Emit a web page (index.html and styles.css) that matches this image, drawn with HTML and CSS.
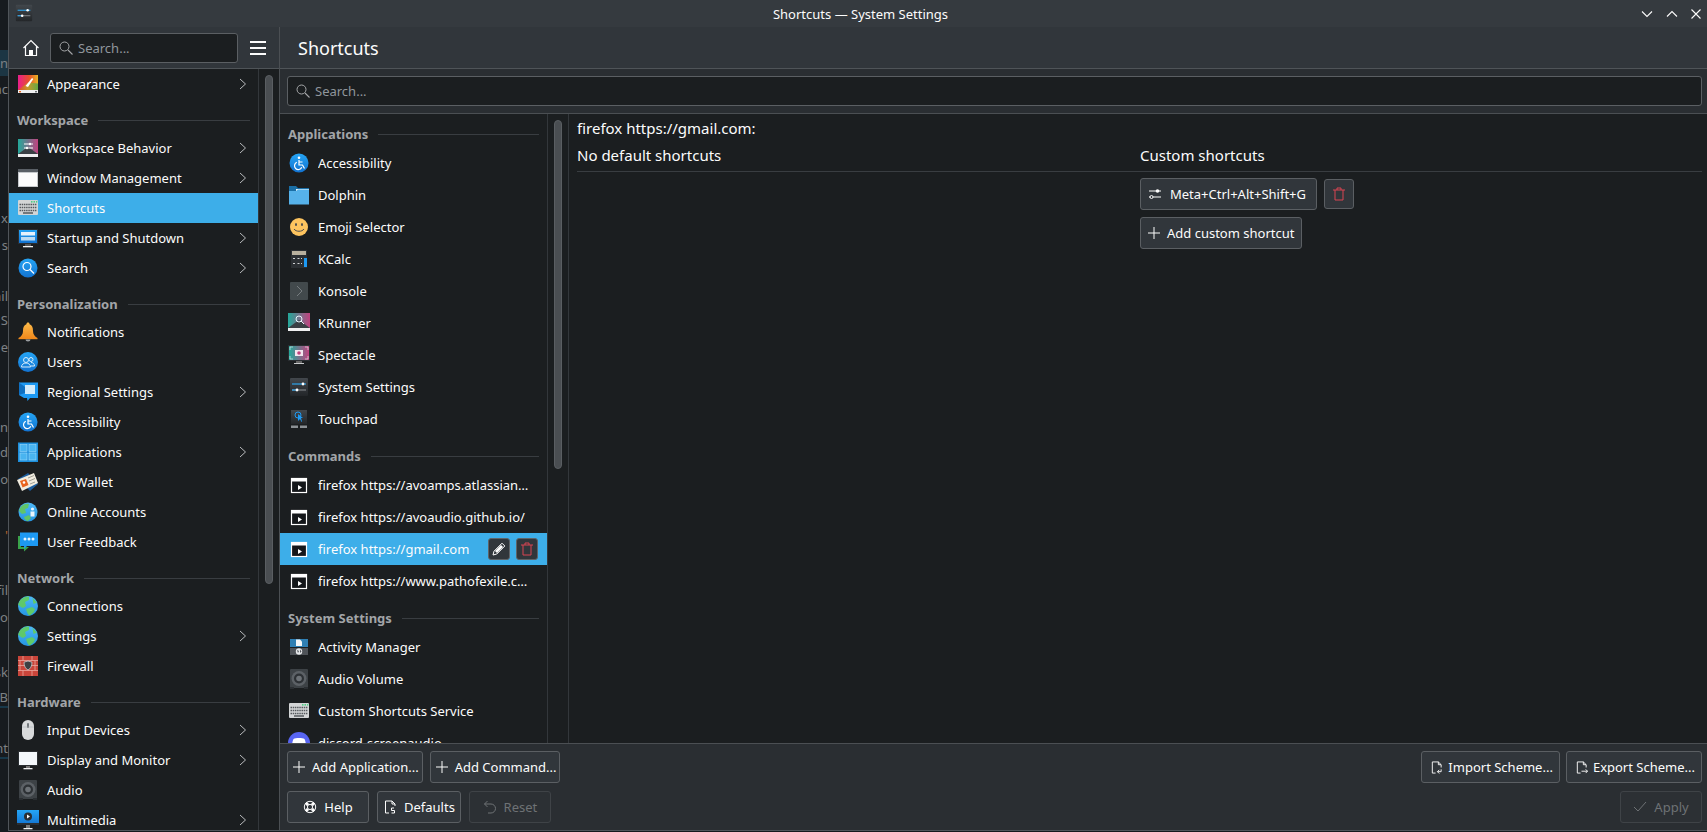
FILE: index.html
```html
<!DOCTYPE html>
<html lang="en">
<head>
<meta charset="utf-8">
<title>Shortcuts — System Settings</title>
<link rel="stylesheet" href="styles.css">
</head>
<body>
<svg class="sprite" xmlns="http://www.w3.org/2000/svg">
<defs>
<linearGradient id="gBlue" x1="0" y1="0" x2="0" y2="1"><stop offset="0" stop-color="#25a5f5"/><stop offset="1" stop-color="#1272d0"/></linearGradient>
<linearGradient id="gGlobe" x1="0" y1="0" x2="0" y2="1"><stop offset="0" stop-color="#4fb8f6"/><stop offset="1" stop-color="#2596e2"/></linearGradient>
<linearGradient id="gDark" x1="0" y1="0" x2="0" y2="1"><stop offset="0" stop-color="#42474c"/><stop offset="1" stop-color="#232629"/></linearGradient>
<linearGradient id="gBell" x1="0" y1="0" x2="0" y2="1"><stop offset="0" stop-color="#fdbc4b"/><stop offset="1" stop-color="#f08a1d"/></linearGradient>
<linearGradient id="gRainbow" x1="0" y1="0" x2="1" y2="0"><stop offset="0" stop-color="#e91e8c"/><stop offset=".55" stop-color="#e8502a"/><stop offset="1" stop-color="#e9b524"/></linearGradient>
<linearGradient id="gLow" x1="0" y1="0" x2="1" y2="0"><stop offset="0" stop-color="#e8402e"/><stop offset=".5" stop-color="#c79a2a"/><stop offset="1" stop-color="#63a844"/></linearGradient>
<linearGradient id="gPink" x1="0" y1="0" x2="1" y2="0"><stop offset="0" stop-color="#23a99a"/><stop offset="1" stop-color="#c1427f"/></linearGradient>
</defs>
<symbol id="i-settings" viewBox="0 0 22 22"><rect x="2" y="2" width="18" height="18" rx="1" fill="url(#gDark)"/><path d="M4 8h14" stroke="#2ea3ea" stroke-width="1.2"/><circle cx="15" cy="8" r="1.4" fill="#fff"/><path d="M4 14h14" stroke="#8b9094" stroke-width="1"/><path d="M4 14h5" stroke="#2ea3ea" stroke-width="1.2"/><circle cx="9" cy="14" r="1.4" fill="#fff"/></symbol>
<symbol id="i-appearance" viewBox="0 0 22 22"><rect x="1" y="2" width="20" height="15" fill="url(#gRainbow)"/><path d="M1 17 11 9.500l10 1V17z" fill="url(#gLow)"/><path d="M8.500 13 15 5l1.300 1-5.300 8z" fill="#fff"/><rect x="1" y="17" width="20" height="3" fill="#eff0f1"/><rect x="2" y="18" width="2" height="1.4" fill="#e8641f"/><rect x="18" y="18" width="2" height="1.4" fill="#6b7275"/></symbol>
<symbol id="i-behavior" viewBox="0 0 22 22"><rect x="1" y="2" width="20" height="15" fill="url(#gPink)"/><path d="M1 17 11 10l10 7z" fill="#3a4045"/><path d="M7 7h9M7 11h9" stroke="#fff" stroke-width="1"/><circle cx="13" cy="7" r="1.2" fill="#fff"/><circle cx="10" cy="11" r="1.2" fill="#fff"/><rect x="1" y="17" width="20" height="3" fill="#eff0f1"/></symbol>
<symbol id="i-window" viewBox="0 0 22 22"><rect x="1" y="2" width="20" height="18" fill="#c5c8cb"/><rect x="1" y="2" width="20" height="3" fill="#5a6066"/><rect x="2" y="6" width="18" height="13" fill="#fcfcfc"/></symbol>
<symbol id="i-keyboard" viewBox="0 0 22 22"><rect x="1" y="3" width="20" height="15" rx="1" fill="#d3d5d6"/><rect x="14" y="4.200" width="1.500" height="1.300" fill="#2ecc71"/><rect x="16.500" y="4.200" width="1.500" height="1.300" fill="#2ecc71"/><rect x="19" y="4.200" width="1.300" height="1.300" fill="#2ecc71"/><path d="M2.500 7.500h17M2.500 10.500h17M2.500 13.500h17" stroke="#55595d" stroke-width="1.600" stroke-dasharray="1.500 .7"/><path d="M6 16h10" stroke="#55595d" stroke-width="1.500"/></symbol>
<symbol id="i-startup" viewBox="0 0 22 22"><rect x="1" y="2" width="20" height="15" fill="#2a2e32"/><rect x="2" y="3" width="18" height="13" fill="url(#gBlue)"/><rect x="4" y="5" width="14" height="3.500" fill="#e6f2fb"/><rect x="4" y="10" width="14" height="3.500" fill="#bcdcf3"/><rect x="8" y="17" width="6" height="2" fill="#555"/><rect x="6" y="19" width="10" height="1.300" fill="#eff0f1"/></symbol>
<symbol id="i-search-app" viewBox="0 0 22 22"><circle cx="11" cy="11" r="9.500" fill="url(#gBlue)"/><circle cx="10" cy="9.500" r="4" fill="none" stroke="#fff" stroke-width="1.200"/><path d="m13 12.500 4 4" stroke="#fff" stroke-width="1.300"/></symbol>
<symbol id="i-bell" viewBox="0 0 22 22"><path d="M11 1.500c-1 0-1.500.7-1.600 1.700C6.800 4 6 6.500 6 10c0 3-1.500 5.500-4.500 7h19c-3-1.500-4.500-4-4.500-7 0-3.500-.8-6-3.400-6.800C12.500 2.200 12 1.500 11 1.500z" fill="url(#gBell)"/><rect x="1.500" y="17" width="19" height="1.200" fill="#f08a1d"/><path d="M8.500 18.500h5a2.500 2 0 0 1-5 0z" fill="#9a9ea1"/></symbol>
<symbol id="i-users" viewBox="0 0 22 22"><circle cx="11" cy="11" r="10" fill="url(#gBlue)"/><g fill="none" stroke="#d6ecfb" stroke-width="1"><circle cx="9" cy="9" r="2.500"/><circle cx="14" cy="8.500" r="2"/><path d="M4.500 16c0-2.500 2-4 4.500-4s4.500 1.500 4.500 4z"/><path d="M14 11.500c2 0 3.500 1.200 3.500 3.500h-3.500"/></g></symbol>
<symbol id="i-regional" viewBox="0 0 22 22"><path d="M2 1.500h19v15.500h-8l-2.500 3-.5-3H7L2 14z" fill="#1d99f3"/><path d="M2 1.500 8 6v6l-6 2z" fill="#0f6fc0"/><rect x="8" y="4" width="10" height="9" fill="#d4ecfb"/></symbol>
<symbol id="i-access" viewBox="0 0 22 22"><circle cx="11" cy="11" r="9.500" fill="url(#gBlue)"/><circle cx="11" cy="5.700" r="1.300" fill="#fff"/><path d="M11 8v5h3.500l2 3.500M11 10h3.500" fill="none" stroke="#fff" stroke-width="1.200"/><path d="M8.800 10.300a3.800 3.800 0 1 0 5 5" fill="none" stroke="#fff" stroke-width="1.200"/></symbol>
<symbol id="i-apps" viewBox="0 0 22 22"><rect x="1" y="1.500" width="20" height="19.500" fill="#1d8fdc"/><g fill="#49b4f0" stroke="#9bd9fb" stroke-width=".6"><rect x="3" y="3.500" width="7" height="7"/><rect x="12" y="3.500" width="7" height="7"/><rect x="3" y="12" width="7" height="7"/><rect x="12" y="12" width="7" height="7"/></g></symbol>
<symbol id="i-wallet" viewBox="0 0 22 22"><path d="M1 8 11 2l10 11-8 7z" fill="#1c5d9e"/><path d="M0 9 17 2l4 10-16 8z" fill="#f1ecdf"/><path d="M3 10 9 8l2.500 6-6 2.500z" fill="#e8641f"/><circle cx="7" cy="11.500" r="1.300" fill="#fff"/><path d="m11 7 6-2.500M12 10l6-2.500M13 13l5-2" stroke="#8a8a80" stroke-width=".8"/></symbol>
<symbol id="i-online" viewBox="0 0 22 22"><circle cx="11" cy="11" r="9.500" fill="url(#gGlobe)"/><path d="M3 7c2-4 7-5 9-4l-1 4-3 1 1 4-4 1-3-3zM7 16l5-2 2 3-3 3c-2 0-4-2-4-4z" fill="#5fc46a"/><circle cx="15.500" cy="8" r="1.600" fill="#eaf5fc"/><rect x="13.500" y="10.500" width="4" height="5" fill="#eaf5fc"/></symbol>
<symbol id="i-feedback" viewBox="0 0 22 22"><path d="M1 5h3v11H1z" fill="#3aa34a"/><path d="M1 16h11l-5 4.500V18H1z" fill="#3aa34a"/><path d="M3 1.500h18V15H10l-3 3v-3H3z" fill="#1d99f3"/><g fill="#e5f3fc"><circle cx="8" cy="8" r="1.500"/><circle cx="12" cy="8" r="1.500"/><circle cx="16" cy="8" r="1.500"/></g></symbol>
<symbol id="i-globe" viewBox="0 0 22 22"><circle cx="11" cy="11" r="10" fill="url(#gGlobe)"/><path d="M3 5.500C5 3 9 1 12 1.500L12 5 8 7l1 4-3 2-2-1-3-2.500zM9 14l6-2 3 2-1 3-4 3.500c-2 0-3-3-4-6.500zM15.500 3l4.500 4.500-3.500 1.500z" fill="#5fc96a"/></symbol>
<symbol id="i-firewall" viewBox="0 0 22 22"><rect x="1" y="1" width="20" height="20" fill="#c9453a"/><path d="M1 5.500h20M1 10.500h20M1 15.500h20M6 1v4.500M15 1v4.500M3 5.500v5M18 5.500v5M3 10.500v5M18 10.500v5M6 15.500v5.500M15 15.500v5.500" stroke="#eba69d" stroke-width=".8"/><path d="M11 6l4 1.200c0 4-1.500 6.500-4 7.800-2.500-1.300-4-3.800-4-7.800z" fill="#3b3f42" stroke="#c7c9cb" stroke-width=".8"/></symbol>
<symbol id="i-mouse" viewBox="0 0 22 22"><rect x="5" y="1" width="12" height="20" rx="6" fill="#d8dadb"/><rect x="10" y="4" width="2" height="5" rx="1" fill="#73787c"/><path d="M5 8h12" stroke="#a7aaad" stroke-width=".5"/></symbol>
<symbol id="i-display" viewBox="0 0 22 22"><rect x="1" y="2" width="20" height="15" fill="#2a2e32"/><rect x="2" y="3" width="18" height="13" fill="#f4f8fb"/><rect x="9" y="17" width="4" height="2" fill="#777"/><rect x="6.500" y="19" width="9" height="1.300" fill="#eff0f1"/></symbol>
<symbol id="i-audio" viewBox="0 0 22 22"><rect x="2" y="1" width="18" height="19" rx="1" fill="#3d4246"/><rect x="2" y="19" width="4" height="2" fill="#2a2e32"/><rect x="16" y="19" width="4" height="2" fill="#2a2e32"/><circle cx="11" cy="10.500" r="7.500" fill="#5c6166"/><circle cx="11" cy="10.500" r="5" fill="#2d3135"/><circle cx="11" cy="10.500" r="2.800" fill="#6d7277"/></symbol>
<symbol id="i-media" viewBox="0 0 22 22"><rect x="0" y="1" width="22" height="15" fill="url(#gBlue)"/><rect x="0" y="14" width="22" height="2" fill="#2a2e32"/><circle cx="11" cy="7.500" r="4" fill="#2a2e32"/><path d="m10 5.500 3 2-3 2z" fill="#fff"/><rect x="9" y="16" width="4" height="3" fill="#777"/><rect x="6.500" y="19" width="9" height="1.300" fill="#eff0f1"/></symbol>
<symbol id="i-folder" viewBox="0 0 22 22"><path d="M1 2h7l2 2h11v16H1z" fill="#1a6ea5"/><rect x="8" y="5" width="13" height="2" fill="#eaf5fc"/><path d="M1 7h7l2-1.500h11V20.500H1z" fill="#56b2ea"/></symbol>
<symbol id="i-emoji" viewBox="0 0 22 22"><circle cx="11" cy="11" r="9" fill="#fdc45f"/><ellipse cx="8" cy="8.500" rx="1" ry="1.500" fill="#4d4d4d"/><ellipse cx="14" cy="8.500" rx="1" ry="1.500" fill="#4d4d4d"/><path d="M6 13c2 3 8 3 10 0" fill="none" stroke="#4d4d4d" stroke-width="1"/></symbol>
<symbol id="i-kcalc" viewBox="0 0 22 22"><rect x="3" y="2" width="16" height="18" fill="#2b2f33"/><rect x="4" y="3" width="14" height="4" fill="#b8b09e"/><rect x="16" y="10" width="3" height="9" fill="#1d99f3"/><path d="M5 10.500h2M9.500 10.500h2M5 15.500h2M9.500 15.500h2M13 10.500h1M13 15.500h1" stroke="#cfd1d3" stroke-width="1"/></symbol>
<symbol id="i-konsole" viewBox="0 0 22 22"><rect x="2" y="2" width="18" height="18" rx="1" fill="#42494c"/><path d="m9 6 5 5-5 5" fill="none" stroke="#767c7f" stroke-width="1"/></symbol>
<symbol id="i-krunner" viewBox="0 0 22 22"><rect x="0" y="1" width="22" height="15" fill="url(#gPink)"/><path d="M0 16 11 8l11 8z" fill="#3a4045"/><circle cx="11" cy="7" r="3" fill="none" stroke="#eaf5fc" stroke-width="1"/><path d="m13 9 3 3" stroke="#eaf5fc" stroke-width="1"/><rect x="0" y="16" width="22" height="3" fill="#eff0f1"/></symbol>
<symbol id="i-spectacle" viewBox="0 0 22 22"><rect x="0" y="1" width="22" height="16" fill="#2a2e32"/><rect x="1" y="2" width="20" height="14" fill="url(#gPink)"/><rect x="7" y="6" width="8" height="6" fill="#f3e6ef"/><circle cx="11" cy="9" r="1.800" fill="#c1427f"/><path d="M2 6V3h3M20 6V3h-3M2 12v3h3M20 12v3h-3" fill="none" stroke="#dfe3e6" stroke-width=".7"/><rect x="8" y="17" width="6" height="2" fill="#666"/><rect x="6" y="19" width="10" height="1" fill="#c8cacc"/></symbol>
<symbol id="i-touchpad" viewBox="0 0 22 22"><rect x="3" y="2" width="16" height="14" fill="url(#gDark)"/><path d="M10 6v7l2-2 1.500 3 .5-.5L13 10h2z" fill="#1d99f3"/><circle cx="10" cy="7" r="3" fill="none" stroke="#1d99f3"/><rect x="3" y="17.500" width="7" height="2.500" fill="#8b9094"/><rect x="12" y="17.500" width="7" height="2.500" fill="#8b9094"/></symbol>
<symbol id="i-command" viewBox="0 0 22 22"><rect x="3.500" y="4.500" width="15" height="14" fill="#14171a" stroke="#fff" stroke-width="1.200"/><rect x="3" y="4" width="16" height="3.500" fill="#fff"/><path d="m10 11 4 2.500-4 2.500z" fill="#fff"/></symbol>
<symbol id="i-activity" viewBox="0 0 22 22"><rect x="2" y="3" width="18" height="8" fill="#2f7fb3"/><path d="M8 3.500h4l2 2V10H8z" fill="#f4f6f7"/><rect x="2" y="12" width="18" height="7" fill="#4f5358"/><circle cx="11" cy="15.500" r="3.200" fill="#e6e8ea"/><path d="M9 14l2 1-1 2zM12 13.500l1.500 2-1.500 1.500z" fill="#4f5358"/></symbol>
<symbol id="i-discord" viewBox="0 0 22 22"><circle cx="11" cy="11" r="11" fill="#5865f2"/><path d="M5.500 7c2-1.300 9-1.300 11 0 1 2 1.500 5 1.500 8-1 .8-2 1.200-3 1.500l-1-1.500H8L7 16.500c-1-.3-2-.7-3-1.500 0-3 .5-6 1.500-8z" fill="#fff"/></symbol>
<symbol id="i-chev" viewBox="0 0 8 12"><path d="m1 1 5.500 5L1 11" fill="none" stroke="#b9bbbd" stroke-width="1"/></symbol>
<symbol id="i-home" viewBox="0 0 18 18"><path d="M1.500 9 9 1.500 16.500 9M3.500 7.500v9h11v-9" fill="none" stroke="#fcfcfc" stroke-width="1.200"/><rect x="7" y="11" width="4" height="5.500" fill="#fcfcfc"/></symbol>
<symbol id="i-loupe" viewBox="0 0 14 14"><circle cx="5.500" cy="5.500" r="4.500" fill="none" stroke="#a5a7a9" stroke-width="1"/><path d="m9 9 4.500 4.500" stroke="#a5a7a9" stroke-width="1.100"/></symbol>
<symbol id="i-plus" viewBox="0 0 12 12"><path d="M6 0v12M0 6h12" stroke="#fcfcfc" stroke-width="1"/></symbol>
<symbol id="i-trash" viewBox="0 0 14 14"><path d="M1 3h12M5 3V1h4v2M3 3v10h8V3" fill="none" stroke="#da4453" stroke-width="1"/></symbol>
<symbol id="i-pencil" viewBox="0 0 14 14"><path d="m10 1.200 2.800 2.800-8 8-3.800 1 1-3.800z" fill="#31363b" stroke="#fcfcfc" stroke-width="1"/><path d="m9 3 2 2-6 6-2-2z" fill="#fcfcfc"/></symbol>
<symbol id="i-sliders" viewBox="0 0 14 14"><path d="M1 4h12M1 10h12" stroke="#fcfcfc" stroke-width="1"/><circle cx="9.500" cy="4" r="1.800" fill="#fcfcfc"/><circle cx="3.500" cy="10" r="1.500" fill="#31363b" stroke="#fcfcfc"/></symbol>
<symbol id="i-help" viewBox="0 0 14 14"><circle cx="7" cy="7" r="5.700" fill="none" stroke="#fcfcfc" stroke-width="1"/><path d="m2.800 2.800 2.400 2.400M11.200 2.800 8.800 5.200M2.800 11.200l2.400-2.400M11.200 11.200 8.800 8.800" stroke="#fcfcfc" stroke-width="3"/><circle cx="7" cy="7" r="2.600" fill="#31363b" stroke="#fcfcfc" stroke-width="1"/></symbol>
<symbol id="i-doc-back" viewBox="0 0 14 14"><path d="M9 1H2.500v12H6M9 1l3 3v2M9 1v3h3" fill="none" stroke="#fcfcfc" stroke-width="1"/><path d="M11 8H8.500v2.500h3V13H8.500" fill="none" stroke="#fcfcfc" stroke-width="1"/></symbol>
<symbol id="i-undo" viewBox="0 0 14 14"><path d="M4.500 1 1.500 4l3 3M1.500 4H8a4.500 4.500 0 0 1 0 9H5" fill="none" stroke="#6e7275" stroke-width="1"/></symbol>
<symbol id="i-import" viewBox="0 0 14 14"><path d="M9 1H2.500v12H6M9 1l3 3v3M9 1v3h3M12 9v2.500H8M10 9.500 8 11.500 10 13.500" fill="none" stroke="#fcfcfc" stroke-width="1"/></symbol>
<symbol id="i-export" viewBox="0 0 14 14"><path d="M9 1H2.500v12H6M9 1l3 3v3M9 1v3h3M7 11h6.500M11.500 9l2 2-2 2" fill="none" stroke="#fcfcfc" stroke-width="1"/></symbol>
<symbol id="i-check" viewBox="0 0 14 14"><path d="m1 7 4 4 8-9" fill="none" stroke="#6e7275" stroke-width="1"/></symbol>
<symbol id="i-min" viewBox="0 0 12 8"><path d="m1 1.500 5 5 5-5" fill="none" stroke="#fcfcfc" stroke-width="1.100"/></symbol>
<symbol id="i-max" viewBox="0 0 12 8"><path d="m1 6.500 5-5 5 5" fill="none" stroke="#fcfcfc" stroke-width="1.100"/></symbol>
<symbol id="i-close" viewBox="0 0 10 10"><path d="m.5.500 9 9M9.500.500l-9 9" fill="none" stroke="#fcfcfc" stroke-width="1.100"/></symbol>
</svg>

<div class="desktop">
  <span class="frag first hl">n</span>
  <span class="frag g8">ac</span>
  <span class="frag g111">x</span>
  <span class="frag g9">s</span>
  <span class="frag g33">ail</span>
  <span class="frag g6">S</span>
  <span class="frag g9">e</span>
  <span class="frag g62">sn</span>
  <span class="frag g7">d</span>
  <span class="frag g9">o</span>
  <span class="frag g38 warm">'</span>
  <span class="frag g37">fil</span>
  <span class="frag g9">lo</span>
  <span class="frag g37">sk</span>
  <span class="frag g7 under">B</span>
  <span class="frag g33 under">nt</span>
</div>

<div class="window">
  <header class="titlebar">
    <svg class="tb-app"><use href="#i-settings"/></svg>
    <div class="tb-title">Shortcuts — System Settings</div>
    <div class="tb-btns">
      <svg class="tb-btn"><use href="#i-min"/></svg>
      <svg class="tb-btn"><use href="#i-max"/></svg>
      <svg class="tb-btn tb-x"><use href="#i-close"/></svg>
    </div>
  </header>
  <div class="main">
    <aside class="sidebar">
      <div class="side-head">
        <svg class="home"><use href="#i-home"/></svg>
        <div class="search side-search"><svg class="loupe"><use href="#i-loupe"/></svg><span>Search...</span></div>
        <div class="burger"><i></i><i></i><i></i></div>
      </div>
      <div class="side-body">
        <nav class="side-list">
          <div class="row"><svg class="ic"><use href="#i-appearance"/></svg><span class="lbl">Appearance</span><svg class="chev"><use href="#i-chev"/></svg></div>
          <div class="sec"><b>Workspace</b><i></i></div>
          <div class="row"><svg class="ic"><use href="#i-behavior"/></svg><span class="lbl">Workspace Behavior</span><svg class="chev"><use href="#i-chev"/></svg></div>
          <div class="row"><svg class="ic"><use href="#i-window"/></svg><span class="lbl">Window Management</span><svg class="chev"><use href="#i-chev"/></svg></div>
          <div class="row sel"><svg class="ic"><use href="#i-keyboard"/></svg><span class="lbl">Shortcuts</span></div>
          <div class="row"><svg class="ic"><use href="#i-startup"/></svg><span class="lbl">Startup and Shutdown</span><svg class="chev"><use href="#i-chev"/></svg></div>
          <div class="row"><svg class="ic"><use href="#i-search-app"/></svg><span class="lbl">Search</span><svg class="chev"><use href="#i-chev"/></svg></div>
          <div class="sec"><b>Personalization</b><i></i></div>
          <div class="row"><svg class="ic"><use href="#i-bell"/></svg><span class="lbl">Notifications</span></div>
          <div class="row"><svg class="ic"><use href="#i-users"/></svg><span class="lbl">Users</span></div>
          <div class="row"><svg class="ic"><use href="#i-regional"/></svg><span class="lbl">Regional Settings</span><svg class="chev"><use href="#i-chev"/></svg></div>
          <div class="row"><svg class="ic"><use href="#i-access"/></svg><span class="lbl">Accessibility</span></div>
          <div class="row"><svg class="ic"><use href="#i-apps"/></svg><span class="lbl">Applications</span><svg class="chev"><use href="#i-chev"/></svg></div>
          <div class="row"><svg class="ic"><use href="#i-wallet"/></svg><span class="lbl">KDE Wallet</span></div>
          <div class="row"><svg class="ic"><use href="#i-online"/></svg><span class="lbl">Online Accounts</span></div>
          <div class="row"><svg class="ic"><use href="#i-feedback"/></svg><span class="lbl">User Feedback</span></div>
          <div class="sec"><b>Network</b><i></i></div>
          <div class="row"><svg class="ic"><use href="#i-globe"/></svg><span class="lbl">Connections</span></div>
          <div class="row"><svg class="ic"><use href="#i-globe"/></svg><span class="lbl">Settings</span><svg class="chev"><use href="#i-chev"/></svg></div>
          <div class="row"><svg class="ic"><use href="#i-firewall"/></svg><span class="lbl">Firewall</span></div>
          <div class="sec"><b>Hardware</b><i></i></div>
          <div class="row"><svg class="ic"><use href="#i-mouse"/></svg><span class="lbl">Input Devices</span><svg class="chev"><use href="#i-chev"/></svg></div>
          <div class="row"><svg class="ic"><use href="#i-display"/></svg><span class="lbl">Display and Monitor</span><svg class="chev"><use href="#i-chev"/></svg></div>
          <div class="row"><svg class="ic"><use href="#i-audio"/></svg><span class="lbl">Audio</span></div>
          <div class="row"><svg class="ic"><use href="#i-media"/></svg><span class="lbl">Multimedia</span><svg class="chev"><use href="#i-chev"/></svg></div>
        </nav>
        <div class="sb-col"><div class="thumb thumb-side"></div></div>
      </div>
    </aside>
    <section class="content">
      <div class="page-title">Shortcuts</div>
      <div class="toolbar"><div class="search wide"><svg class="loupe"><use href="#i-loupe"/></svg><span>Search...</span></div></div>
      <div class="panes">
        <div class="cmp-list">
          <div class="sec s2 s-first"><b>Applications</b><i></i></div>
          <div class="row r2"><svg class="ic"><use href="#i-access"/></svg><span class="lbl">Accessibility</span></div>
          <div class="row r2"><svg class="ic"><use href="#i-folder"/></svg><span class="lbl">Dolphin</span></div>
          <div class="row r2"><svg class="ic"><use href="#i-emoji"/></svg><span class="lbl">Emoji Selector</span></div>
          <div class="row r2"><svg class="ic"><use href="#i-kcalc"/></svg><span class="lbl">KCalc</span></div>
          <div class="row r2"><svg class="ic"><use href="#i-konsole"/></svg><span class="lbl">Konsole</span></div>
          <div class="row r2"><svg class="ic"><use href="#i-krunner"/></svg><span class="lbl">KRunner</span></div>
          <div class="row r2"><svg class="ic"><use href="#i-spectacle"/></svg><span class="lbl">Spectacle</span></div>
          <div class="row r2"><svg class="ic"><use href="#i-settings"/></svg><span class="lbl">System Settings</span></div>
          <div class="row r2"><svg class="ic"><use href="#i-touchpad"/></svg><span class="lbl">Touchpad</span></div>
          <div class="sec s2"><b>Commands</b><i></i></div>
          <div class="row r2"><svg class="ic"><use href="#i-command"/></svg><span class="lbl">firefox https://avoamps.atlassian.net/wiki</span></div>
          <div class="row r2"><svg class="ic"><use href="#i-command"/></svg><span class="lbl">firefox https://avoaudio.github.io/</span></div>
          <div class="row r2 sel"><svg class="ic"><use href="#i-command"/></svg><span class="lbl">firefox https://gmail.com</span>
            <span class="mini"><svg class="mini-ic"><use href="#i-pencil"/></svg></span><span class="mini"><svg class="mini-ic"><use href="#i-trash"/></svg></span></div>
          <div class="row r2"><svg class="ic"><use href="#i-command"/></svg><span class="lbl">firefox https://www.pathofexile.com/trade</span></div>
          <div class="sec s2"><b>System Settings</b><i></i></div>
          <div class="row r2"><svg class="ic"><use href="#i-activity"/></svg><span class="lbl">Activity Manager</span></div>
          <div class="row r2"><svg class="ic"><use href="#i-audio"/></svg><span class="lbl">Audio Volume</span></div>
          <div class="row r2"><svg class="ic"><use href="#i-keyboard"/></svg><span class="lbl">Custom Shortcuts Service</span></div>
          <div class="row r2"><svg class="ic"><use href="#i-discord"/></svg><span class="lbl">discord-screenaudio</span></div>
        </div>
        <div class="sb-col"><div class="thumb thumb-cmp"></div></div>
        <div class="details">
          <div class="det-title">firefox https://gmail.com:</div>
          <div class="det-grid">
            <div class="det-h">No default shortcuts</div>
            <div class="det-h">Custom shortcuts</div>
            <div></div>
            <div class="det-actions">
              <div class="key-row">
                <button class="btn key"><svg class="bi"><use href="#i-sliders"/></svg>Meta+Ctrl+Alt+Shift+G</button>
                <button class="btn tbtn"><svg class="bi"><use href="#i-trash"/></svg></button>
              </div>
              <div><button class="btn addc"><svg class="bp"><use href="#i-plus"/></svg>Add custom shortcut</button></div>
            </div>
          </div>
        </div>
      </div>
      <footer class="footer">
        <div class="f-row">
          <div class="f-group">
            <button class="btn f-add"><svg class="bp"><use href="#i-plus"/></svg>Add Application...</button>
            <button class="btn f-add"><svg class="bp"><use href="#i-plus"/></svg>Add Command...</button>
          </div>
          <div class="f-group tight">
            <button class="btn f-sch"><svg class="bi"><use href="#i-import"/></svg>Import Scheme...</button>
            <button class="btn f-sch"><svg class="bi"><use href="#i-export"/></svg>Export Scheme...</button>
          </div>
        </div>
        <div class="f-row">
          <div class="f-group wide-gap">
            <button class="btn std"><svg class="bi"><use href="#i-help"/></svg>Help</button>
            <button class="btn std"><svg class="bi"><use href="#i-doc-back"/></svg>Defaults</button>
            <button class="btn std off"><svg class="bi"><use href="#i-undo"/></svg>Reset</button>
          </div>
          <button class="btn std off"><svg class="bi"><use href="#i-check"/></svg>Apply</button>
        </div>
      </footer>
    </section>
  </div>
</div>
</body>
</html>
```

FILE: styles.css
```css
* { box-sizing: border-box; }
html, body { margin: 0; height: 100%; overflow: hidden; }
body {
  display: flex;
  background: #171b1f;
  color: #fcfcfc;
  font: 13px/18px "Noto Sans", "Open Sans", sans-serif;
}
.sprite { position: absolute; width: 0; height: 0; }

.desktop {
  width: 8px;
  flex: none;
  display: flex;
  flex-direction: column;
  padding-top: 54px;
  overflow: hidden;
  color: #7d8185;
}
.frag { height: 18px; display: flex; justify-content: flex-end; white-space: nowrap; }
.hl { background: #1c3644; height: 26px; align-items: center; margin-top: -4px; margin-bottom: -4px; }
.warm { color: #b5642c; }
.under { border-bottom: 2px solid #17384a; height: 20px; margin-bottom: -2px; }
.g6 { margin-top: 6px; } .g7 { margin-top: 7px; } .g8 { margin-top: 8px; } .g9 { margin-top: 9px; }
.g33 { margin-top: 33px; } .g37 { margin-top: 37px; } .g38 { margin-top: 38px; }
.g62 { margin-top: 62px; } .g111 { margin-top: 111px; }

.window {
  width: 1699px;
  height: 831px;
  flex: none;
  display: flex;
  flex-direction: column;
  border-left: 1px solid #50555a;
  border-bottom: 1px solid #50555a;
  background: #2a2e32;
}
.titlebar {
  height: 27px;
  flex: none;
  display: flex;
  align-items: center;
  background: #353a3f;
  padding: 0 6px 0 5px;
}
.tb-app { width: 20px; height: 20px; margin-top: -1px; }
.tb-title { flex: 1; text-align: center; margin-left: 59px; margin-right: 13px; }
.tb-btns { display: flex; gap: 13px; align-items: center; }
.tb-btn { width: 12px; height: 8px; }
.tb-x { width: 10px; height: 10px; }

.main { flex: 1; display: flex; min-height: 0; overflow: hidden; }
.sidebar { width: 271px; flex: none; display: flex; flex-direction: column; border-right: 1px solid #4b4f53; }
.side-head {
  height: 42px;
  flex: none;
  display: flex;
  align-items: center;
  padding: 0 12px 0 13px;
  background: #31363b;
  border-bottom: 1px solid #4f5458;
}
.home { width: 18px; height: 18px; margin-right: 10px; }
.search {
  display: flex;
  align-items: center;
  gap: 5px;
  height: 30px;
  background: #1b1e20;
  border: 1px solid #5b5f63;
  border-radius: 3px;
  padding-left: 8px;
  color: #90969c;
}
.loupe { width: 14px; height: 14px; }
.side-search { width: 188px; margin-right: 12px; }
.burger { display: flex; flex-direction: column; gap: 4px; width: 16px; }
.burger i { display: block; height: 2px; background: #fcfcfc; }

.side-body { flex: 1; display: flex; min-height: 0; background: #1b1e20; }
.side-list { width: 250px; flex: none; border-right: 1px solid #33373b; overflow: hidden; }
.row { height: 30px; display: flex; align-items: center; padding-left: 8px; gap: 8px; }
.ic { width: 22px; height: 22px; flex: none; }
.lbl { flex: 1; min-width: 0; white-space: nowrap; overflow: hidden; text-overflow: ellipsis; }
.chev { width: 8px; height: 12px; margin-right: 11px; flex: none; }
.sel { background: #3daee9; }
.sec { height: 34px; display: flex; align-items: center; gap: 10px; padding: 8px 8px 0 8px; color: #a2a5a8; }
.sec b { font-weight: 700; white-space: nowrap; }
.sec i { flex: 1; height: 1px; background: #393d41; }
.sb-col { width: 20px; flex: none; padding: 6px 0 0 6px; background: #1b1e20; }
.thumb { width: 8px; border: 1px solid #5a5e62; border-radius: 4px; background: #4a4e52; }
.thumb-side { height: 509px; }
.thumb-cmp { height: 349px; }

.content { flex: 1; min-width: 0; display: flex; flex-direction: column; }
.page-title {
  height: 42px;
  flex: none;
  padding: 8px 0 0 18px;
  font-size: 18px;
  line-height: 26px;
  background: #31363b;
  border-bottom: 1px solid #4f5458;
}
.toolbar { height: 45px; flex: none; padding: 7px 5px 0 7px; border-bottom: 1px solid #4b4f53; }
.wide { width: 100%; }
.panes { flex: 1; min-height: 0; display: flex; background: #1b1e20; }
.cmp-list { width: 268px; flex: none; border-right: 1px solid #33373b; overflow: hidden; }
.r2 { height: 32px; gap: 8px; padding-right: 17px; }
.r2.sel { padding-right: 9px; }
.s2 { height: 34px; }
.s-first { height: 33px; padding-top: 7px; }
.mini {
  width: 22px; height: 22px; flex: none;
  display: flex; align-items: center; justify-content: center;
  background: #31363b; border: 1px solid #5f6367; border-radius: 3px;
}
.mini + .mini { margin-left: -2px; }
.mini-ic { width: 14px; height: 14px; }
.details { flex: 1; min-width: 0; border-left: 1px solid #33373b; padding: 4px 5px 0 8px; font-size: 15px; line-height: 20px; }
.det-title { height: 20px; }
.det-grid { display: grid; grid-template-columns: 563px 1fr; margin-top: 7px; }
.det-h { padding-bottom: 6px; border-bottom: 1px solid #393d41; }
.det-actions { display: flex; flex-direction: column; gap: 7px; padding-top: 6px; font-size: 13px; line-height: 18px; }
.key-row { display: flex; align-items: center; gap: 7px; }

.btn {
  display: inline-flex;
  align-items: center;
  justify-content: center;
  height: 32px;
  padding: 0 5px;
  background: #31363b;
  color: #fcfcfc;
  border: 1px solid #5b5f63;
  border-radius: 3px;
  font: inherit;
  white-space: nowrap;
}
.bi { width: 14px; height: 14px; margin-right: 7px; flex: none; }
.bp { width: 12px; height: 12px; margin-right: 7px; flex: none; }
.key { width: 177px; justify-content: flex-start; padding-left: 7px; }
.key .bi { margin-right: 8px; }
.tbtn { width: 30px; height: 30px; padding: 0; }
.tbtn .bi { margin: 0; }
.addc { width: 162px; justify-content: flex-start; padding-left: 7px; }
.f-add { padding: 0 3px 0 5px; }
.f-sch { padding: 0 6px 0 8px; }
.f-sch .bi { width: 13px; height: 13px; margin-right: 5px; }

.footer { height: 87px; flex: none; padding: 7px 5px 0 7px; border-top: 1px solid #4b4f53; background: #2a2e32; display: flex; flex-direction: column; gap: 8px; }
.f-row { display: flex; justify-content: space-between; }
.f-group { display: flex; gap: 7px; }
.tight { gap: 6px; }
.wide-gap { gap: 8px; }
.std { min-width: 82px; }
.off { color: #6e7275; background: #2c3034; border-color: #3f4347; }
```
